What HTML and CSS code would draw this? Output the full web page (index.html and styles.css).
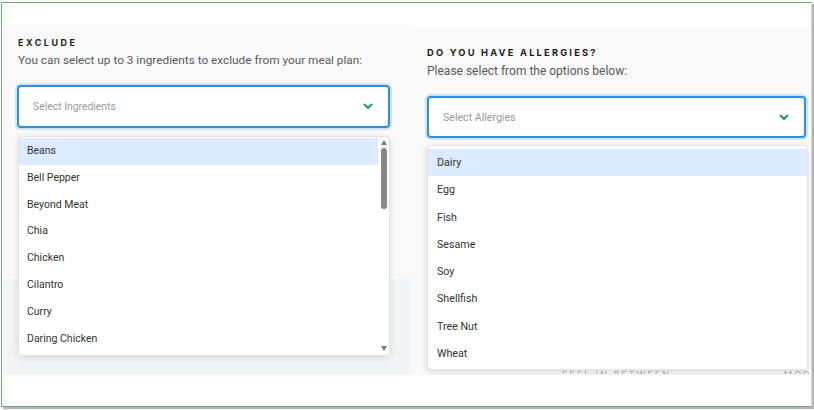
FILE: index.html
```html
<!DOCTYPE html>
<html>
<head>
<meta charset="utf-8">
<link rel="stylesheet" href="styles.css">
</head>
<body>
<div class="frame">
  <section class="panel panel-left">
    <div class="band"></div>
    <div class="body">
      <h2 class="heading">EXCLUDE</h2>
      <p class="sub">You can select up to 3 ingredients to exclude from your meal plan:</p>
      <div class="select">
        <span class="ph">Select Ingredients</span>
        <svg class="chev" width="10" height="7" viewBox="0 0 10 7"><polyline points="1.5,1.5 5,5 8.5,1.5" fill="none" stroke="#1f9e6b" stroke-width="2" stroke-linecap="round" stroke-linejoin="round"/></svg>
      </div>
      <div class="list list-left">
        <ul class="items">
          <li class="active">Beans</li>
          <li>Bell Pepper</li>
          <li>Beyond Meat</li>
          <li>Chia</li>
          <li>Chicken</li>
          <li>Cilantro</li>
          <li>Curry</li>
          <li>Daring Chicken</li>
        </ul>
        <div class="scroll">
          <span class="arrow up"></span>
          <span class="thumb"></span>
          <span class="fill"></span>
          <span class="arrow down"></span>
        </div>
      </div>
    </div>
    <div class="lower"></div>
  </section>
  <section class="panel panel-right">
    <div class="band"></div>
    <div class="body">
      <h2 class="heading">DO YOU HAVE ALLERGIES?</h2>
      <p class="sub">Please select from the options below:</p>
      <div class="select">
        <span class="ph">Select Allergies</span>
        <svg class="chev" width="10" height="7" viewBox="0 0 10 7"><polyline points="1.5,1.5 5,5 8.5,1.5" fill="none" stroke="#1f9e6b" stroke-width="2" stroke-linecap="round" stroke-linejoin="round"/></svg>
      </div>
      <div class="list list-right">
        <ul class="items">
          <li class="active">Dairy</li>
          <li>Egg</li>
          <li>Fish</li>
          <li>Sesame</li>
          <li>Soy</li>
          <li>Shellfish</li>
          <li>Tree Nut</li>
          <li>Wheat</li>
        </ul>
      </div>
      <div class="peek"><span class="peek-a">FEEL IN BETWEEN</span><span class="peek-b">MOD</span></div>
    </div>
  </section>
</div>
</body>
</html>
```
FILE: styles.css
```css
* { box-sizing: border-box; }
html, body { margin: 0; padding: 0; background: #fff; }
body { width: 814px; height: 410px; overflow: hidden; font-family: Roboto, "Liberation Sans", sans-serif; }

.frame {
  margin: 2px 0 0 1px;
  width: 811px;
  height: 405px;
  border: 1.5px solid #72aa74;
  border-right: 1px solid #d8d8d8;
  box-shadow: 2px 2px 1px #b5b5b5;
  display: flex;
  background: #fff;
}

.panel { display: flex; flex-direction: column; }
.panel-left { width: 409px; }
.panel-right { width: 398px; }

.band { background: #fff; flex: none; }
.panel-left .band { height: 22px; }
.panel-right .band { height: 24px; }

.body { background: #f9f9f9; display: flex; flex-direction: column; }
.panel-left .body { padding: 12px 0 0 16px; height: 254px; overflow: visible; }
.panel-right .body { padding: 20px 0 0 16px; height: 348px; }
.lower { background: #f3f4f6; height: 96px; }

.heading {
  margin: 0;
  font-family: Inter, "Open Sans", sans-serif;
  font-weight: 700;
  font-size: 9px;
  line-height: 11px;
  letter-spacing: 2.5px;
  color: #1d1d1d;
}
.panel-right .heading { font-size: 9.3px; letter-spacing: 2.2px; }

.sub {
  margin: 4px 0 0 0;
  font-size: 11.8px;
  line-height: 16px;
  color: #5a5a5a;
}
.panel-right .sub { margin-top: 5px; font-size: 12px; }

.select {
  margin-top: 17px;
  margin-left: -1px;
  height: 43px;
  width: 373px;
  border: 2px solid #2f8fe0;
  border-radius: 4px;
  background: #fff;
  box-shadow: 0 0 0 2px rgba(60, 150, 230, 0.22);
  display: flex;
  align-items: center;
  justify-content: space-between;
  padding: 0 15px 0 14px;
  flex: none;
}
.panel-right .select { height: 42px; width: 379px; margin-left: 0; }
.ph { font-size: 10.4px; color: #9a9a9a; }
.panel-right .ph { font-size: 10.6px; }

.list {
  background: #fff;
  border: 1px solid #e2e2e2;
  border-radius: 3px;
  box-shadow: 0 2px 6px rgba(0, 0, 0, 0.12);
  display: flex;
  flex: none;
  position: relative;
  z-index: 2;
}
.list-left { margin: 8px 0 0 0; width: 372px; height: 220px; padding-top: 1px; }
.list-right { margin: 7px 0 0 0; width: 381px; height: 225px; padding-top: 3px; }

.items { list-style: none; margin: 0; padding: 0; flex: 1; }
.items li {
  height: 26.8px;
  line-height: 26.8px;
  padding-left: 8px;
  font-size: 10.5px;
  color: #333;
}
.list-right .items li { height: 27.3px; line-height: 27.3px; padding-left: 9px; font-size: 10.7px; }
.items li.active { background: #dcebfd; }

.scroll {
  width: 11px;
  display: flex;
  flex-direction: column;
  align-items: center;
  padding: 2px 0 4px 0;
}
.arrow { width: 0; height: 0; border-left: 3.5px solid transparent; border-right: 3.5px solid transparent; }
.arrow.up { border-bottom: 5px solid #7a7a7a; }
.arrow.down { border-top: 5px solid #7a7a7a; }
.thumb { width: 6px; height: 61px; margin-top: 3px; background: #888; border-radius: 3px; }
.fill { flex: 1; }

.peek {
  height: 4px;
  overflow: hidden;
  margin-top: 0;
  font-family: Inter, sans-serif;
  font-size: 9px;
  line-height: 10px;
  letter-spacing: 2px;
  color: #aaa;
  white-space: nowrap;
}
.peek span { display: inline-block; margin-top: -1px; }
.peek-a { margin-left: 135px; }
.peek-b { margin-left: 113px; }
```
